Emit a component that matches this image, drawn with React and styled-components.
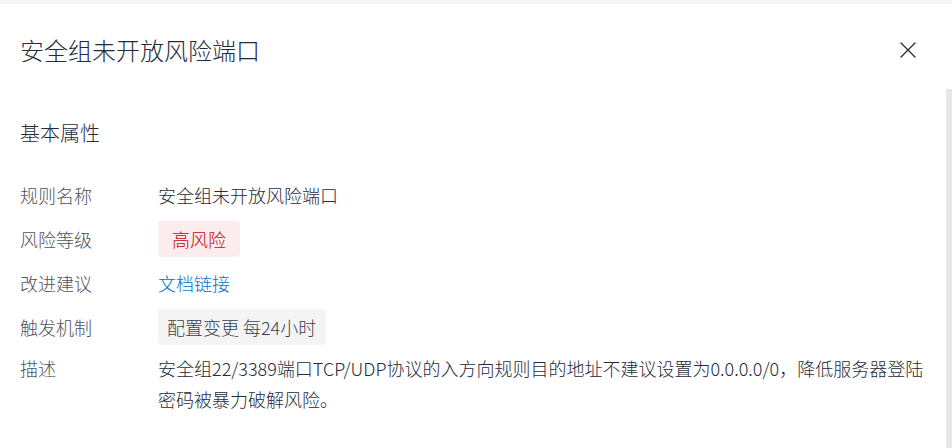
import React from 'react';
import styled, { createGlobalStyle } from 'styled-components';

const GlobalStyle = createGlobalStyle`
  html, body {
    margin: 0;
    padding: 0;
    background: #ffffff;
  }
  body {
    font-family: "Noto Sans CJK SC", "Noto Sans", sans-serif;
    font-weight: 300;
    color: #252b3a;
  }
`;

const rows = [
  { label: '规则名称', kind: 'text', value: '安全组未开放风险端口' },
  { label: '风险等级', kind: 'danger', value: '高风险' },
  { label: '改进建议', kind: 'link', value: '文档链接' },
  { label: '触发机制', kind: 'plain', value: '配置变更 每24小时' },
  {
    label: '描述',
    kind: 'desc',
    value:
      '安全组22/3389端口TCP/UDP协议的入方向规则目的地址不建议设置为0.0.0.0/0，降低服务器登陆密码被暴力破解风险。',
  },
];

function CloseIcon() {
  return (
    <svg width="16" height="16" viewBox="0 0 16 16" fill="none">
      <path d="M1 1 L15 15 M15 1 L1 15" stroke="#252b3a" strokeWidth="1.3" strokeLinecap="round" />
    </svg>
  );
}

function Value({ row }) {
  if (row.kind === 'danger') return <Tag $tone="danger">{row.value}</Tag>;
  if (row.kind === 'plain') return <Tag $tone="plain">{row.value}</Tag>;
  if (row.kind === 'link') return <DocLink href="#">{row.value}</DocLink>;
  if (row.kind === 'desc') return <Desc>{row.value}</Desc>;
  return <Text>{row.value}</Text>;
}

export default function App() {
  return (
    <>
      <GlobalStyle />
      <Page>
        <TopStrip />
        <Header>
          <Title>安全组未开放风险端口</Title>
          <CloseButton aria-label="关闭">
            <CloseIcon />
          </CloseButton>
        </Header>
        <Scroller>
          <Body>
            <SectionTitle>基本属性</SectionTitle>
            <List>
              {rows.map((row) => (
                <Row key={row.label} $multi={row.kind === 'desc'}>
                  <Label $multi={row.kind === 'desc'}>{row.label}</Label>
                  <Value row={row} />
                </Row>
              ))}
            </List>
          </Body>
          <ScrollTrack />
        </Scroller>
      </Page>
    </>
  );
}

const Page = styled.div`
  width: 952px;
  height: 448px;
  display: flex;
  flex-direction: column;
  overflow: hidden;
  background: #ffffff;
`;

const TopStrip = styled.div`
  height: 4px;
  flex: none;
  background: #f5f5f6;
`;

const Header = styled.div`
  flex: none;
  height: 85px;
  box-sizing: border-box;
  padding: 30px 36px 23px 20px;
  display: flex;
  align-items: center;
  justify-content: space-between;
`;

const Title = styled.h2`
  margin: 0;
  font-size: 24px;
  font-weight: 300;
  line-height: 32px;
  color: #252b3a;
`;

const CloseButton = styled.button`
  border: 0;
  background: none;
  padding: 0;
  width: 16px;
  height: 16px;
  display: flex;
  cursor: pointer;
`;

const Scroller = styled.div`
  flex: 1;
  display: flex;
  min-height: 0;
`;

const Body = styled.div`
  flex: 1;
  padding: 30px 8px 0 20px;
`;

const ScrollTrack = styled.div`
  width: 6px;
  flex: none;
  background: #e6e6e8;
`;

const SectionTitle = styled.h3`
  margin: 0 0 30px;
  font-size: 20px;
  font-weight: 300;
  line-height: 28px;
  color: #252b3a;
`;

const List = styled.div`
  display: flex;
  flex-direction: column;
  gap: 8px;
`;

const Row = styled.div`
  display: grid;
  grid-template-columns: 138px 1fr;
  align-items: ${(p) => (p.$multi ? 'start' : 'center')};
  font-size: 18px;
`;

const Label = styled.div`
  line-height: ${(p) => (p.$multi ? '31px' : '36px')};
  color: #4e5260;
`;

const Text = styled.div`
  line-height: 36px;
  color: #252b3a;
`;

const DocLink = styled.a`
  line-height: 36px;
  color: #0a6fc4;
  text-decoration: none;
  justify-self: start;
`;

const Tag = styled.span`
  justify-self: start;
  height: 36px;
  line-height: 36px;
  border-radius: 4px;
  padding: ${(p) => (p.$tone === 'danger' ? '0 14px' : '0 10px 0 9px')};
  background: ${(p) => (p.$tone === 'danger' ? '#fdecee' : '#f4f4f5')};
  color: ${(p) => (p.$tone === 'danger' ? '#c7000b' : '#3a3f4b')};
`;

const Desc = styled.div`
  line-height: 31px;
  color: #252b3a;
`;
